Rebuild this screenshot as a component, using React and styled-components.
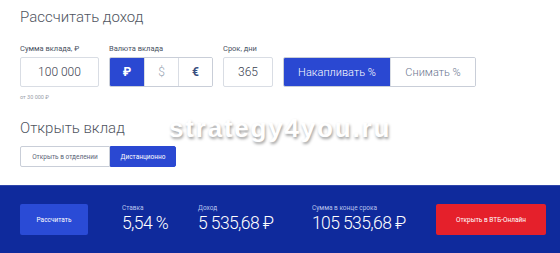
import React, { useState } from 'react';
import styled, { createGlobalStyle } from 'styled-components';

const Global = createGlobalStyle`
  html, body {
    margin: 0;
    padding: 0;
    background: #fff;
  }
  body {
    width: 560px;
    height: 253px;
    overflow: hidden;
    font-family: Roboto, "Liberation Sans", Arial, sans-serif;
  }
`;

const Page = styled.div`
  position: relative;
  width: 560px;
  height: 253px;
  display: flex;
  flex-direction: column;
`;

const Top = styled.div`
  display: flex;
  flex-direction: column;
  padding: 8px 20px 0;
  height: 177px;
`;

const Title = styled.h2`
  margin: 0;
  font-size: 15px;
  line-height: 18px;
  font-weight: 300;
  color: #50555f;
  margin-top: ${p => p.$mt || 0}px;
`;

const FieldsRow = styled.div`
  display: flex;
  align-items: flex-end;
  gap: 10px;
  margin-top: 18px;
`;

const Field = styled.div`
  display: flex;
  flex-direction: column;
`;

const Label = styled.div`
  font-size: 7.5px;
  line-height: 10px;
  color: #4a5263;
  margin-bottom: 3px;
`;

const Input = styled.div`
  width: ${p => p.$w}px;
  height: 30px;
  box-sizing: border-box;
  border: 1px solid #d9dde4;
  border-radius: 2px;
  display: flex;
  align-items: center;
  justify-content: center;
  font-size: 12px;
  font-weight: 300;
  color: #3b4150;
`;

const Segmented = styled.div`
  display: flex;
  height: 30px;
  box-sizing: border-box;
  border: 1px solid #c9ced8;
  border-radius: 2px;
  overflow: hidden;
`;

const Seg = styled.button`
  width: ${p => p.$w}px;
  height: 100%;
  border: none;
  border-left: ${p => (p.$first ? 'none' : '1px solid #d9dde4')};
  background: ${p => (p.$active ? '#2a48d2' : '#fff')};
  color: ${p => (p.$active ? '#fff' : p.$color || '#6b7690')};
  font-family: inherit;
  font-size: ${p => p.$fs || 12}px;
  font-weight: ${p => p.$fw || 300};
  padding: 0;
  cursor: pointer;
`;

const Hint = styled.div`
  font-size: 5.5px;
  line-height: 8px;
  color: #9aa0aa;
  margin-top: 6px;
`;

const SmallGroup = styled.div`
  display: flex;
  margin-top: 9px;
  height: 21px;
  width: max-content;
`;

const SmallBtn = styled.button`
  width: ${p => p.$w}px;
  height: 21px;
  box-sizing: border-box;
  border: 1px solid ${p => (p.$active ? '#2a48d2' : '#c9ced8')};
  border-radius: ${p => (p.$left ? '2px 0 0 2px' : '0 2px 2px 0')};
  background: ${p => (p.$active ? '#2a48d2' : '#fff')};
  color: ${p => (p.$active ? '#fff' : '#5b6478')};
  font-family: inherit;
  font-size: 6.5px;
  padding: 0;
`;

const Bar = styled.div`
  flex: 1;
  background: #0f2a9c;
  border-top: 1px solid #2f46aa;
  display: flex;
  align-items: center;
  padding: 0 14px 0 20px;
`;

const BarButton = styled.button`
  width: ${p => p.$w}px;
  height: 31px;
  border: none;
  border-radius: 2px;
  background: ${p => p.$bg};
  color: #fff;
  font-family: inherit;
  font-size: 6.5px;
  padding: 0;
  margin-left: ${p => (p.$push ? 'auto' : '0')};
`;

const Stat = styled.div`
  width: ${p => p.$w}px;
  display: flex;
  flex-direction: column;
  margin-left: ${p => p.$ml || 0}px;
  margin-top: -2px;
`;

const StatLabel = styled.div`
  font-size: 6.5px;
  line-height: 9px;
  color: #b9c4ee;
`;

const StatValue = styled.div`
  font-size: 17.5px;
  line-height: 20px;
  font-weight: 300;
  color: #fff;
  letter-spacing: -0.6px;
  white-space: nowrap;
`;

const Watermark = styled.div`
  position: absolute;
  left: 169px;
  top: 112px;
  font-family: "Liberation Sans", Arial, sans-serif;
  font-size: 26px;
  font-weight: 700;
  line-height: 32px;
  color: #fff;
  letter-spacing: 1.8px;
  text-shadow: 1px 2px 3px rgba(0, 0, 0, 0.38);
  pointer-events: none;
`;

export default function App() {
  const [currency, setCurrency] = useState('rub');
  const [mode, setMode] = useState('acc');
  const [open, setOpen] = useState('remote');

  return (
    <Page>
      <Global />
      <Top>
        <Title>Рассчитать доход</Title>
        <FieldsRow>
          <Field>
            <Label>Сумма вклада, ₽</Label>
            <Input $w={79}>100 000</Input>
          </Field>
          <Field>
            <Label>Валюта вклада</Label>
            <Segmented>
              <Seg $first $w={34} $active={currency === 'rub'} $fw={700} onClick={() => setCurrency('rub')}>₽</Seg>
              <Seg $w={34} $color="#9aa6b4" $active={currency === 'usd'} onClick={() => setCurrency('usd')}>$</Seg>
              <Seg $w={34} $color="#3a5080" $fw={700} $active={currency === 'eur'} onClick={() => setCurrency('eur')}>€</Seg>
            </Segmented>
          </Field>
          <Field>
            <Label>Срок, дни</Label>
            <Input $w={50}>365</Input>
          </Field>
          <Segmented>
            <Seg $first $w={106} $fs={11} $active={mode === 'acc'} onClick={() => setMode('acc')}>Накапливать %</Seg>
            <Seg $w={85} $fs={11} $active={mode === 'out'} onClick={() => setMode('out')}>Снимать %</Seg>
          </Segmented>
        </FieldsRow>
        <Hint>от 30 000 ₽</Hint>
        <Title $mt={18}>Открыть вклад</Title>
        <SmallGroup>
          <SmallBtn $left $w={90} $active={open === 'office'} onClick={() => setOpen('office')}>Открыть в отделении</SmallBtn>
          <SmallBtn $w={66} $active={open === 'remote'} onClick={() => setOpen('remote')}>Дистанционно</SmallBtn>
        </SmallGroup>
      </Top>
      <Bar>
        <BarButton $w={68} $bg="#2a4bd6">Рассчитать</BarButton>
        <Stat $w={76} $ml={34}>
          <StatLabel>Ставка</StatLabel>
          <StatValue>5,54 %</StatValue>
        </Stat>
        <Stat $w={114}>
          <StatLabel>Доход</StatLabel>
          <StatValue>5 535,68 ₽</StatValue>
        </Stat>
        <Stat $w={110}>
          <StatLabel>Сумма в конце срока</StatLabel>
          <StatValue>105 535,68 ₽</StatValue>
        </Stat>
        <BarButton $push $w={110} $bg="#e5202b">Открыть в ВТБ-Онлайн</BarButton>
      </Bar>
      <Watermark>strategy4you.ru</Watermark>
    </Page>
  );
}
